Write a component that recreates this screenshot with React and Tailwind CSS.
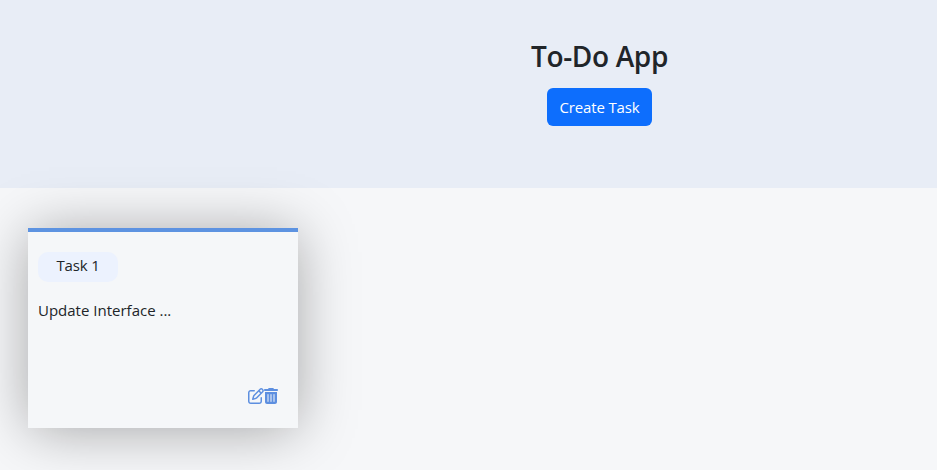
import { FaRegPenToSquare, FaTrashCan } from "react-icons/fa6";

function Header() {
  return (
    <header className="flex h-[188px] flex-col items-center bg-[#e8edf6] pt-[39px] pl-[262px]">
      <h1 className="text-[28px] leading-[34px] font-semibold tracking-[-0.35px] whitespace-nowrap">To-Do App</h1>
      <button className="mt-[15px] h-[38px] w-[105px] rounded-md bg-[#0d6efd] text-[15px] tracking-[-0.15px] whitespace-nowrap text-white">
        Create Task
      </button>
    </header>
  );
}

function TaskCard({ name, description }) {
  return (
    <article className="flex h-[200px] w-[270px] flex-col border-t-4 border-[#5d93e1] bg-[#f5f7f9] px-2.5 pt-5 shadow-[0_3px_54px_-2px_rgba(0,0,0,0.35)]">
      <span className="flex h-[30px] w-20 justify-center rounded-[10px] bg-[#ecf2fe] text-[15px] leading-[26px] tracking-[-0.15px]">
        {name}
      </span>
      <p className="mt-4 text-[15px] leading-6">{description}</p>
      <div className="mt-[66px] mr-2.5 flex justify-end text-[#5d8fe0]">
        <FaRegPenToSquare className="h-4 w-4" />
        <FaTrashCan className="h-4 w-3.5" />
      </div>
    </article>
  );
}

export default function App() {
  return (
    <div className="h-[470px] overflow-hidden bg-[#f6f7f9] font-['Open_Sans','Noto_Sans',sans-serif] text-[#212529]">
      <Header />
      <main className="px-7 pt-10">
        <TaskCard name="Task 1" description="Update Interface ..." />
      </main>
    </div>
  );
}
